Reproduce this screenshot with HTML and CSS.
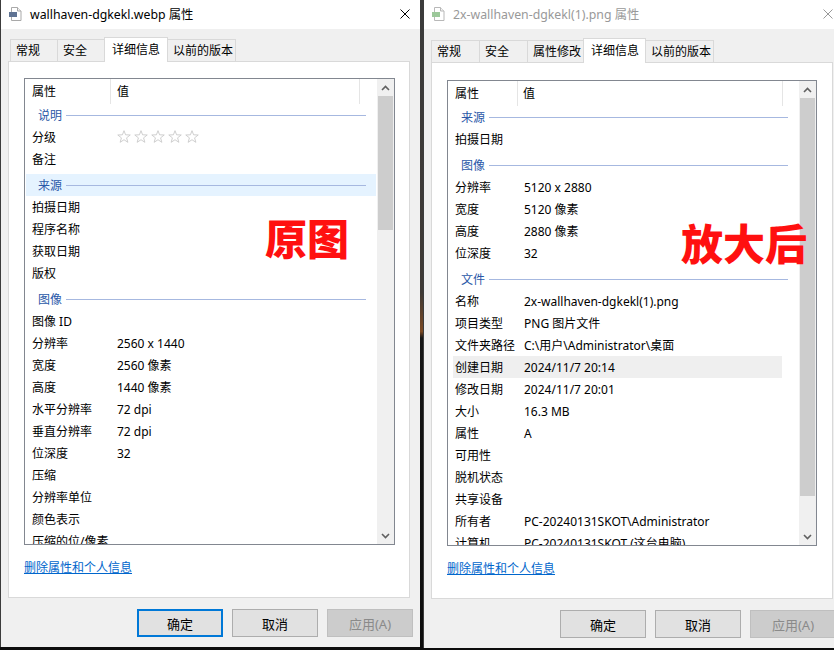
FILE: index.html
```html
<!DOCTYPE html>
<html lang="zh-CN">
<head>
  <meta charset="UTF-8" />
  <meta name="viewport" content="width=device-width, initial-scale=1.0" />
  <title>属性</title>
  <link rel="stylesheet" href="styles.css">
</head>
<body>
  <div class="desk">

    <!-- 原图 -->
    <div class="win front">
      <div class="titlebar">
        <svg class="ico" width="16" height="16" viewBox="0 0 16 16">
          <path d="M3.5 1.5h6l3.5 3.5v9.5h-9.5z" fill="#fff" stroke="#a9a9a9" />
          <path d="M9.5 1.5v3.5h3.5" fill="#f2f2f2" stroke="#a9a9a9" />
          <rect x="1" y="6" width="8" height="5" fill="#5f7393" />
        </svg>
        <span class="title">wallhaven-dgkekl.webp 属性</span>
        <svg class="close" width="10" height="10" viewBox="0 0 10 10">
          <path d="M0.5 0.5L9.5 9.5M9.5 0.5L0.5 9.5" stroke="#000" stroke-width="1" />
        </svg>
      </div>
      <div class="wbody">
        <div class="tabs">
          <div class="tab">常规</div>
          <div class="tab">安全</div>
          <div class="tab sel">详细信息</div>
          <div class="tab">以前的版本</div>
        </div>
        <div class="panel">
          <div class="list">
            <div class="list-main">
              <div class="head">
                <div class="hc c1">属性</div>
                <div class="hc c2">值</div>
              </div>
              <div class="rows">
                <div class="grp">说明</div>
                <div class="item"><span class="k">分级</span>
                  <span class="v stars">
                    <svg viewBox="0 0 16 16"><polygon points="8,0.8 9.82,5.49 15.13,5.68 10.95,8.96 12.41,14.07 8,11.1 3.59,14.07 5.05,8.96 0.87,5.68 6.18,5.49" /></svg>
                    <svg viewBox="0 0 16 16"><polygon points="8,0.8 9.82,5.49 15.13,5.68 10.95,8.96 12.41,14.07 8,11.1 3.59,14.07 5.05,8.96 0.87,5.68 6.18,5.49" /></svg>
                    <svg viewBox="0 0 16 16"><polygon points="8,0.8 9.82,5.49 15.13,5.68 10.95,8.96 12.41,14.07 8,11.1 3.59,14.07 5.05,8.96 0.87,5.68 6.18,5.49" /></svg>
                    <svg viewBox="0 0 16 16"><polygon points="8,0.8 9.82,5.49 15.13,5.68 10.95,8.96 12.41,14.07 8,11.1 3.59,14.07 5.05,8.96 0.87,5.68 6.18,5.49" /></svg>
                    <svg viewBox="0 0 16 16"><polygon points="8,0.8 9.82,5.49 15.13,5.68 10.95,8.96 12.41,14.07 8,11.1 3.59,14.07 5.05,8.96 0.87,5.68 6.18,5.49" /></svg>
                  </span>
                </div>
                <div class="item"><span class="k">备注</span></div>
                <div class="grp hover">来源</div>
                <div class="item"><span class="k">拍摄日期</span></div>
                <div class="item"><span class="k">程序名称</span></div>
                <div class="item"><span class="k">获取日期</span></div>
                <div class="item"><span class="k">版权</span></div>
                <div class="grp">图像</div>
                <div class="item"><span class="k">图像 ID</span></div>
                <div class="item"><span class="k">分辨率</span><span class="v">2560 x 1440</span></div>
                <div class="item"><span class="k">宽度</span><span class="v">2560 像素</span></div>
                <div class="item"><span class="k">高度</span><span class="v">1440 像素</span></div>
                <div class="item"><span class="k">水平分辨率</span><span class="v">72 dpi</span></div>
                <div class="item"><span class="k">垂直分辨率</span><span class="v">72 dpi</span></div>
                <div class="item"><span class="k">位深度</span><span class="v">32</span></div>
                <div class="item"><span class="k">压缩</span></div>
                <div class="item"><span class="k">分辨率单位</span></div>
                <div class="item"><span class="k">颜色表示</span></div>
                <div class="item"><span class="k">压缩的位/像素</span></div>
              </div>
            </div>
            <div class="sb">
              <div class="arr"><svg width="9" height="6" viewBox="0 0 9 6"><path d="M1 5L4.5 1.5L8 5" /></svg></div>
              <div class="thumb"></div>
              <div class="track"></div>
              <div class="arr"><svg width="9" height="6" viewBox="0 0 9 6"><path d="M1 1L4.5 4.5L8 1" /></svg></div>
            </div>
            <div class="stamp">原图</div>
          </div>
          <a class="link" href="#">删除属性和个人信息</a>
        </div>
        <div class="btns">
          <div class="btn focus">确定</div>
          <div class="btn">取消</div>
          <div class="btn off">应用(A)</div>
        </div>
      </div>
    </div>

    <!-- 放大后 -->
    <div class="win back">
      <div class="titlebar">
        <svg class="ico" width="16" height="16" viewBox="0 0 16 16">
          <path d="M3.5 1.5h6l3.5 3.5v9.5h-9.5z" fill="#fff" stroke="#b8b8b8" />
          <path d="M9.5 1.5v3.5h3.5" fill="#f2f2f2" stroke="#b8b8b8" />
          <rect x="1" y="6" width="8" height="5" fill="#9cc89a" />
        </svg>
        <span class="title">2x-wallhaven-dgkekl(1).png 属性</span>
        <svg class="close" width="10" height="10" viewBox="0 0 10 10">
          <path d="M0.5 0.5L9.5 9.5M9.5 0.5L0.5 9.5" stroke="#999" stroke-width="1" />
        </svg>
      </div>
      <div class="wbody">
        <div class="tabs">
          <div class="tab">常规</div>
          <div class="tab">安全</div>
          <div class="tab">属性修改</div>
          <div class="tab sel">详细信息</div>
          <div class="tab">以前的版本</div>
        </div>
        <div class="panel">
          <div class="list">
            <div class="list-main">
              <div class="head">
                <div class="hc c1">属性</div>
                <div class="hc c2">值</div>
              </div>
              <div class="rows">
                <div class="grp">来源</div>
                <div class="item"><span class="k">拍摄日期</span></div>
                <div class="grp">图像</div>
                <div class="item"><span class="k">分辨率</span><span class="v">5120 x 2880</span></div>
                <div class="item"><span class="k">宽度</span><span class="v">5120 像素</span></div>
                <div class="item"><span class="k">高度</span><span class="v">2880 像素</span></div>
                <div class="item"><span class="k">位深度</span><span class="v">32</span></div>
                <div class="grp">文件</div>
                <div class="item"><span class="k">名称</span><span class="v">2x-wallhaven-dgkekl(1).png</span></div>
                <div class="item"><span class="k">项目类型</span><span class="v">PNG 图片文件</span></div>
                <div class="item"><span class="k">文件夹路径</span><span class="v">C:\用户\Administrator\桌面</span></div>
                <div class="item sel"><span class="k">创建日期</span><span class="v">2024/11/7 20:14</span></div>
                <div class="item"><span class="k">修改日期</span><span class="v">2024/11/7 20:01</span></div>
                <div class="item"><span class="k">大小</span><span class="v">16.3 MB</span></div>
                <div class="item"><span class="k">属性</span><span class="v">A</span></div>
                <div class="item"><span class="k">可用性</span></div>
                <div class="item"><span class="k">脱机状态</span></div>
                <div class="item"><span class="k">共享设备</span></div>
                <div class="item"><span class="k">所有者</span><span class="v">PC-20240131SKOT\Administrator</span></div>
                <div class="item"><span class="k">计算机</span><span class="v">PC-20240131SKOT (这台电脑)</span></div>
              </div>
            </div>
            <div class="sb">
              <div class="arr"><svg width="9" height="6" viewBox="0 0 9 6"><path d="M1 5L4.5 1.5L8 5" /></svg></div>
              <div class="thumb"></div>
              <div class="track"></div>
              <div class="arr"><svg width="9" height="6" viewBox="0 0 9 6"><path d="M1 1L4.5 4.5L8 1" /></svg></div>
            </div>
            <div class="stamp">放大后</div>
          </div>
          <a class="link" href="#">删除属性和个人信息</a>
        </div>
        <div class="btns">
          <div class="btn">确定</div>
          <div class="btn">取消</div>
          <div class="btn off">应用(A)</div>
        </div>
      </div>
    </div>

  </div>
</body>
</html>
```

FILE: styles.css
```css
* {
  box-sizing: border-box;
}

html, body {
  margin: 0;
}

body {
  width: 834px;
  height: 650px;
  overflow: hidden;
  background: linear-gradient(#3b3b3b, #3e3935 45%, #7a4822 51%, #141414 52%, #0d0d0d);
  font-family: "Noto Sans", "Noto Sans CJK SC", sans-serif;
  font-size: 12px;
  color: #000;
}

.desk {
  display: flex;
  align-items: flex-start;
  gap: 3px;
}

.win {
  flex: none;
  width: 420px;
  height: 647px;
  background: #f0f0f0;
  border-left: 1px solid #3c3c3c;
}

.win.back {
  height: 648px;
}

/* title bar */
.titlebar {
  height: 29px;
  background: #fff;
  display: flex;
  align-items: center;
  padding: 0 0 2px 7px;
}

.ico {
  flex: none;
  margin-right: 6px;
}

.title {
  flex: 1;
  font-size: 12.3px;
}

.back .title {
  color: #999;
}

.close {
  flex: none;
  margin-right: 10px;
}

.wbody {
  padding: 8px 7px 0;
}

.back .wbody {
  padding-top: 9px;
}

/* tabs */
.tabs {
  display: flex;
  align-items: flex-end;
  height: 25px;
  margin-bottom: -1px;
  padding-left: 2px;
  position: relative;
  z-index: 1;
}

.back .tabs {
  padding-left: 0;
}

.tab {
  height: 22px;
  min-width: 47px;
  margin-bottom: 1px;
  padding: 0 2px 0 5px;
  line-height: 21px;
  background: #f0f0f0;
  border: 1px solid #d9d9d9;
  border-bottom: none;
  border-left: none;
}

.tab:first-child {
  min-width: 48px;
  border-left: 1px solid #d9d9d9;
}

.tab.sel {
  height: 25px;
  min-width: 64px;
  margin: 0 0 0 -1px;
  padding: 0 6px 0 7px;
  line-height: 23px;
  background: #fff;
  border-left: 1px solid #d9d9d9;
  position: relative;
}

.back .tab {
  min-width: 48px;
}

.back .tab:first-child {
  min-width: 49px;
}

/* panel */
.panel {
  width: 402px;
  height: 537px;
  background: #fff;
  border: 1px solid #d9d9d9;
  padding: 16px 0 0 15px;
}

.back .panel {
  padding-top: 17px;
}

.list {
  width: 371px;
  height: 467px;
  border: 1px solid #828790;
  display: flex;
  position: relative;
}

.back .list {
  width: 370px;
  height: 466px;
}

.list-main {
  flex: 1;
  display: flex;
  flex-direction: column;
  overflow: hidden;
}

.head {
  flex: none;
  height: 25px;
  display: flex;
}

.hc {
  padding-left: 7px;
  line-height: 25px;
  border-right: 1px solid #e5e5e5;
}

.front .c1 { width: 86px; }
.front .c2 { width: 249px; padding-left: 6px; }
.back .c1 { width: 70px; }
.back .c2 { width: 265px; padding-left: 5px; }

.rows {
  flex: 1;
  overflow: hidden;
}

.grp {
  height: 22px;
  margin: 4px 1px 0;
  padding-left: 12px;
  display: flex;
  align-items: center;
  color: #2a58a8;
}

.grp:first-child {
  margin-top: 0;
}

.grp::after {
  content: "";
  flex: 1;
  height: 1px;
  margin: 0 10px 0 4px;
  background: #a6b8e0;
}

.grp.hover {
  background: #e5f3ff;
}

.item {
  width: 329px;
  height: 22px;
  margin-left: 5px;
  display: flex;
  align-items: center;
  white-space: nowrap;
}

.item.sel {
  background: #efefef;
}

.item .k {
  flex: none;
  width: 85px;
  padding-left: 2px;
}

.back .item .k {
  width: 69px;
}

.item .v {
  padding-left: 2px;
}

.stars {
  display: flex;
  gap: 3px;
}

.stars svg {
  width: 14px;
  height: 14px;
  fill: none;
  stroke: #c8c8c8;
  stroke-width: 1;
}

/* scrollbar */
.sb {
  flex: none;
  width: 17px;
  background: #f0f0f0;
  display: flex;
  flex-direction: column;
}

.arr {
  height: 17px;
  display: flex;
  align-items: center;
  justify-content: center;
}

.arr svg path {
  fill: none;
  stroke: #606060;
  stroke-width: 1.6;
}

.thumb {
  height: 134px;
  margin: 0 1px;
  background: #cdcdcd;
}

.back .thumb {
  height: 398px;
}

.track {
  flex: 1;
}

.stamp {
  position: absolute;
  left: 240px;
  top: 137px;
  font-family: "Noto Sans CJK SC", sans-serif;
  font-size: 42px;
  font-weight: 900;
  line-height: 1;
  color: #ff1010;
}

.back .stamp {
  left: 233px;
  top: 140px;
}

.link {
  display: inline-block;
  margin-top: 15px;
  line-height: 16px;
  color: #0066cc;
  text-decoration: underline;
}

/* buttons */
.btns {
  display: flex;
  justify-content: flex-end;
  gap: 9px;
  margin-top: 11px;
}

.btn {
  width: 86px;
  height: 28px;
  display: flex;
  align-items: center;
  justify-content: center;
  font-size: 13px;
  background: #e1e1e1;
  border: 1px solid #adadad;
}

.btn.focus {
  border: 2px solid #0078d7;
}

.btn.off {
  background: #cccccc;
  border-color: #bfbfbf;
  color: #8a8a8a;
}
```
